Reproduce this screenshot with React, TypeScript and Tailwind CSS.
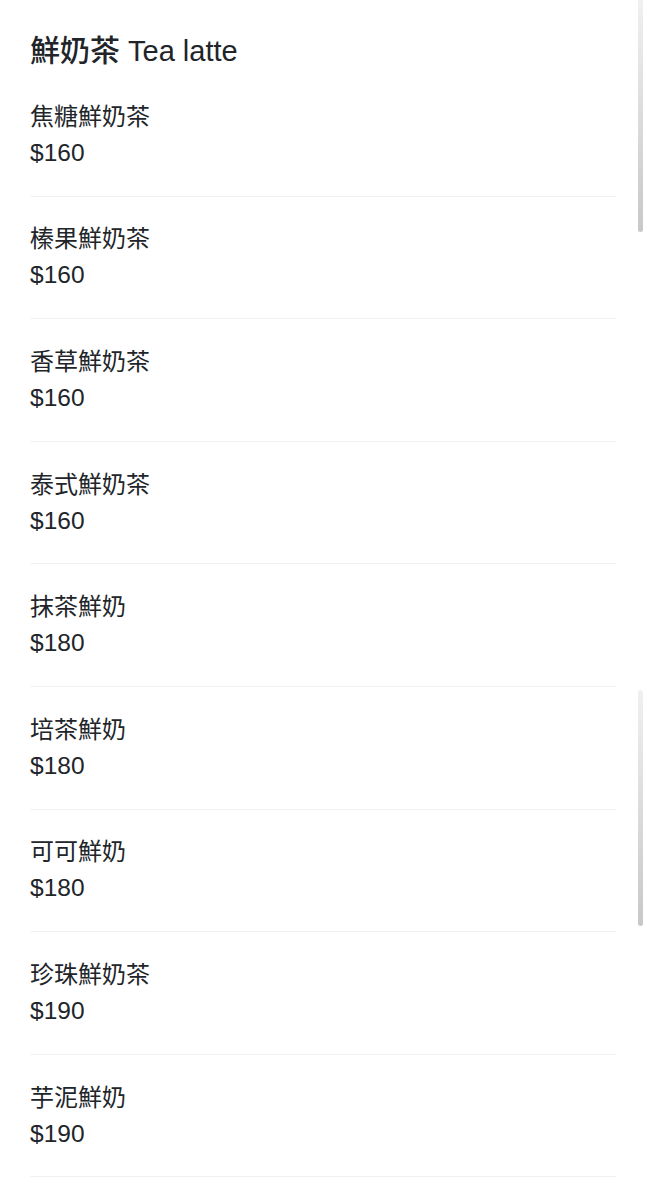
const items = [
  { name: "焦糖鮮奶茶", price: 160 },
  { name: "榛果鮮奶茶", price: 160 },
  { name: "香草鮮奶茶", price: 160 },
  { name: "泰式鮮奶茶", price: 160 },
  { name: "抹茶鮮奶", price: 180 },
  { name: "培茶鮮奶", price: 180 },
  { name: "可可鮮奶", price: 180 },
  { name: "珍珠鮮奶茶", price: 190 },
  { name: "芋泥鮮奶", price: 190 },
]

function App() {
  return (
    <div
      className="relative min-h-[1200px] bg-white text-[#212529]"
      style={{ fontFamily: '"Liberation Sans", "Noto Sans CJK TC", sans-serif' }}
    >
      <div className="px-[30px] pt-[33px]">
        <h2 className="text-[29px] leading-[36px] font-medium mb-[5px]">
          <span className="text-[30px]">鮮奶茶</span> Tea latte
        </h2>
        <ul>
          {items.map((item) => (
            <li key={item.name} className="py-[24.8px] border-b border-[#f2f2f2] mr-[1px]">
              <div className="text-[24px] leading-[36px]">{item.name}</div>
              <div className="text-[24.5px] leading-[36px]">${item.price}</div>
            </li>
          ))}
        </ul>
      </div>

      {/* scroll indicators */}
      <div className="absolute left-[638px] top-0 w-[5px] h-[232px] rounded-b-full bg-gradient-to-b from-[#f0f0f0] to-[#c8c8c8]" />
      <div className="absolute left-[638px] top-[690px] w-[5px] h-[236px] rounded-full bg-gradient-to-b from-[#f0f0f0] to-[#c8c8c8]" />
    </div>
  )
}

export default App
